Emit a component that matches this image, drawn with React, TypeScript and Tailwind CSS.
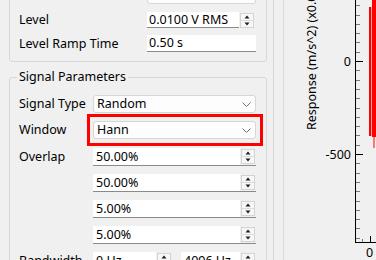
import clsx from 'clsx';

const Chevron = () => (
  <svg width="9" height="5" viewBox="0 0 9 5" className="shrink-0">
    <path d="M0.5 0.5 L4.5 4.5 L8.5 0.5" fill="none" stroke="#707070" strokeWidth="1" />
  </svg>
);

const SpinButtons = () => (
  <svg width="14" height="15" viewBox="0 0 14 15" className="shrink-0">
    <rect x="0.5" y="0.5" width="13" height="14" fill="#f7f7f7" stroke="#d4d4d4" />
    <line x1="1" y1="7.5" x2="13" y2="7.5" stroke="#dcdcdc" />
    <path d="M4.5 5.5 L9.5 5.5 L7 2.5 Z" fill="#1e1e1e" />
    <path d="M4.5 9.5 L9.5 9.5 L7 12.5 Z" fill="#1e1e1e" />
  </svg>
);

const Combo = ({ value, className }: { value: string; className?: string }) => (
  <div
    className={clsx(
      'flex items-center justify-between rounded-[3px] border border-[#d6d6d6] bg-[#fdfdfd] pl-[3px] pr-[4px]',
      className
    )}
  >
    <span>{value}</span>
    <Chevron />
  </div>
);

// spin box whose underline runs under the buttons too
const Spin = ({ value, className }: { value: string; className?: string }) => (
  <div className={clsx('flex h-[18px] items-center border-b border-[#8a8a8a]', className)}>
    <div className="flex h-full flex-1 items-center bg-white pl-[3px]">{value}</div>
    <div className="ml-[1px] mr-[1px] flex items-center">
      <SpinButtons />
    </div>
  </div>
);

const Row = ({ label, labelW, children, className }: { label: string; labelW: string; children: React.ReactNode; className?: string }) => (
  <div className={clsx('flex items-center', className)}>
    <span className={clsx('shrink-0 whitespace-nowrap', labelW)}>{label}</span>
    <div className="flex min-w-0 flex-1">{children}</div>
  </div>
);

const Plot = () => {
  const minor: number[] = [];
  for (let k = -6; k <= 19; k++) {
    if (k === 0 || k === 10) continue;
    const y = 61 + k * 9.3;
    if (y > 0 && y < 241) minor.push(Math.round(y) + 0.5);
  }
  return (
    <svg width="92" height="260" viewBox="0 0 92 260" className="block">
      <text
        transform="translate(32,130) rotate(-90)"
        fontFamily="'Noto Sans', sans-serif"
        fontSize="12.5"
        fill="#000"
      >
        Response (m/s^2) (x0.001)
      </text>
      {/* red traces */}
      <rect x="85" y="7" width="2.3" height="129" fill="#ff0000" />
      <rect x="88" y="0" width="4" height="137" fill="#ff0000" />
      <rect x="89.5" y="130" width="1" height="18" fill="#ff0000" />
      {/* axes */}
      <line x1="71.5" y1="0" x2="71.5" y2="242.5" stroke="#000" />
      <line x1="71" y1="242.5" x2="92" y2="242.5" stroke="#000" />
      {minor.map((y) => (
        <line key={y} x1="72" y1={y} x2="76" y2={y} stroke="#7a7a7a" />
      ))}
      <line x1="72" y1="61.5" x2="79" y2="61.5" stroke="#000" />
      <line x1="72" y1="154.5" x2="79" y2="154.5" stroke="#000" />
      <line x1="86.5" y1="236" x2="86.5" y2="242" stroke="#000" />
      <line x1="78.5" y1="239" x2="78.5" y2="242" stroke="#7a7a7a" />
      <g fontFamily="'Noto Sans', sans-serif" fontSize="12.5" fill="#000">
        <text x="67" y="65.5" textAnchor="end">0</text>
        <text x="67" y="158.5" textAnchor="end">-500</text>
        <text x="85.5" y="257" textAnchor="middle">0</text>
      </g>
    </svg>
  );
};

const App = () => {
  return (
    <div className="flex h-[260px] w-[376px] overflow-hidden bg-[#f0f0f0] font-['Noto_Sans',sans-serif] text-[12.5px] leading-[16px] text-black">
      {/* settings panel */}
      <div className="w-[274px] shrink-0 border-r border-[#d9d9d9] pl-[9px] pr-[6px]">
        <div className="mt-[-23px] flex flex-col rounded-[3px] border border-[#d8d8d8] pb-[9px] pl-[9px] pr-[10px] pt-[10px]">
          <Row label="Estimator" labelW="w-[128px]" className="h-[16px]">
            <Combo value="H1" className="h-[16px] flex-1" />
          </Row>
          <Row label="Level" labelW="w-[128px]" className="mt-[8px] h-[16px]">
            <div className="flex h-[16px] flex-1 items-center">
              <div className="flex h-full flex-1 items-center border-b border-[#8a8a8a] bg-white pl-[2px]">0.0100 V RMS</div>
              <div className="ml-[1px] mr-[2px] flex items-center">
                <SpinButtons />
              </div>
            </div>
          </Row>
          <Row label="Level Ramp Time" labelW="w-[128px]" className="mt-[7px] h-[17px]">
            <div className="flex h-[17px] flex-1 items-center border-b border-[#8a8a8a] bg-white pl-[2px]">0.50 s</div>
          </Row>
        </div>

        <fieldset className="mt-[7px] rounded-[3px] border border-[#d8d8d8] pb-[10px] pl-[9px] pr-[10px] pt-[10px]">
          <legend className="-ml-[2px] px-[2px] leading-[16px]">Signal Parameters</legend>
          <div className="flex flex-col gap-[8px]">
            <Row label="Signal Type" labelW="w-[74px]" className="h-[18px]">
              <Combo value="Random" className="h-[18px] flex-1" />
            </Row>
            <Row label="Window" labelW="w-[74px]" className="h-[18px]">
              <div className="relative flex flex-1">
                <Combo value="Hann" className="h-[18px] flex-1" />
                <div className="absolute bottom-[-7px] left-[-6px] right-[-7px] top-[-7px] border-[3px] border-[#ff0000]" />
              </div>
            </Row>
            <Row label="Overlap" labelW="w-[74px]" className="mt-[1px] h-[18px]">
              <Spin value="50.00%" className="flex-1" />
            </Row>
            <Row label="" labelW="w-[74px]" className="h-[18px]">
              <Spin value="50.00%" className="flex-1" />
            </Row>
            <Row label="" labelW="w-[74px]" className="h-[18px]">
              <Spin value="5.00%" className="flex-1" />
            </Row>
            <Row label="" labelW="w-[74px]" className="h-[18px]">
              <Spin value="5.00%" className="flex-1" />
            </Row>
            <Row label="Bandwidth" labelW="w-[74px]" className="h-[18px]">
              <Spin value="0 Hz" className="w-[79px] shrink-0" />
              <Spin value="4096 Hz" className="ml-[9px] flex-1" />
            </Row>
          </div>
        </fieldset>
      </div>

      {/* splitter */}
      <div className="w-[10px] shrink-0 border-r border-[#d9d9d9]" />

      {/* response plot */}
      <div className="flex-1">
        <Plot />
      </div>
    </div>
  );
};

export default App;
